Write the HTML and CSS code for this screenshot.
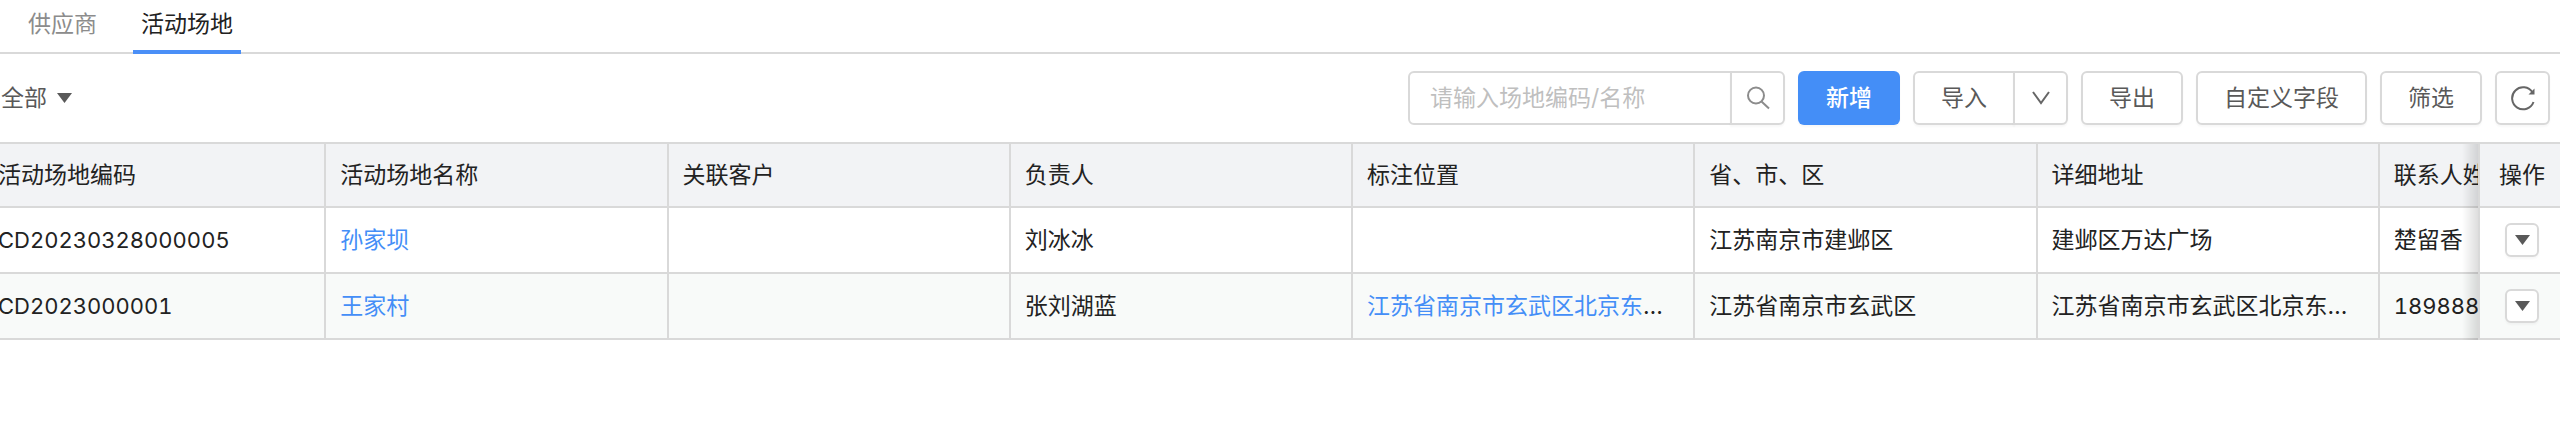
FILE: index.html
```html
<!DOCTYPE html>
<html lang="zh-CN">
<head>
  <meta charset="UTF-8">
  <title>活动场地</title>
  <meta name="viewport" content="width=device-width, initial-scale=1.0">
  <link rel="stylesheet" href="styles.css">
</head>
<body>
<nav class="tabs">
  <a class="tab" href="#supplier">供应商</a>
  <a class="tab active" href="#venue">活动场地</a>
</nav>

<div class="toolbar">
  <button class="filter-all" type="button">全部
    <svg class="caret" viewBox="0 0 15 10"><path d="M0 0h15L7.500 10z"/></svg>
  </button>
  <div class="actions">
    <form class="search">
      <input type="text" class="search-input" aria-label="搜索场地" placeholder="请输入场地编码/名称">
      <button class="btn btn-icon search-btn" type="button" aria-label="搜索">
        <svg class="icon" viewBox="0 0 24 24"><circle cx="10" cy="9.500" r="8"/><path d="M15.500 15.500l7.500 7"/></svg>
      </button>
    </form>
    <button class="btn btn-primary" type="button">新增</button>
    <div class="btn-group">
      <button class="btn" type="button">导入</button>
      <button class="btn btn-icon" type="button" aria-label="更多导入">
        <svg class="icon" viewBox="0 0 24 24"><path d="M4 6l8 11 8-11"/></svg>
      </button>
    </div>
    <button class="btn" type="button">导出</button>
    <button class="btn" type="button">自定义字段</button>
    <button class="btn" type="button">筛选</button>
    <button class="btn btn-icon" type="button" aria-label="刷新">
      <svg class="icon refresh" viewBox="0 0 26 26"><path d="M23.500 17A11 11 0 1 1 22.500 7.500"/><path class="fill" d="M24.500 3.500v6h-6z"/></svg>
    </button>
  </div>
</div>

<div class="table-wrap">
  <table class="grid">
    <colgroup>
      <col span="8">
      <col class="col-op">
    </colgroup>
    <thead>
      <tr>
        <th>活动场地编码</th>
        <th>活动场地名称</th>
        <th>关联客户</th>
        <th>负责人</th>
        <th>标注位置</th>
        <th>省、市、区</th>
        <th>详细地址</th>
        <th>联系人姓名</th>
        <th class="op">操作</th>
      </tr>
    </thead>
    <tbody>
      <tr>
        <td class="num">CD20230328000005</td>
        <td><a href="#sunjiaba">孙家坝</a></td>
        <td></td>
        <td>刘冰冰</td>
        <td></td>
        <td>江苏南京市建邺区</td>
        <td>建邺区万达广场</td>
        <td>楚留香</td>
        <td class="op">
          <button class="row-menu" type="button" aria-label="操作菜单"><svg class="caret" viewBox="0 0 15 10"><path d="M0 0h15L7.500 10z"/></svg></button>
        </td>
      </tr>
      <tr>
        <td class="num">CD2023000001</td>
        <td><a href="#wangjiacun">王家村</a></td>
        <td></td>
        <td>张刘湖蓝</td>
        <td><a href="#map">江苏省南京市玄武区北京东路44号</a></td>
        <td>江苏省南京市玄武区</td>
        <td>江苏省南京市玄武区北京东路44号</td>
        <td class="num">18988888888</td>
        <td class="op">
          <button class="row-menu" type="button" aria-label="操作菜单"><svg class="caret" viewBox="0 0 15 10"><path d="M0 0h15L7.500 10z"/></svg></button>
        </td>
      </tr>
    </tbody>
  </table>
</div>
</body>
</html>
```
FILE: styles.css
```css
* {
  box-sizing: border-box;
}
body {
  margin: 0;
  background: #fff;
  color: #222;
  font-family: Inter, "Noto Sans CJK SC", sans-serif;
  font-size: 23px;
  line-height: 32px;
}
button, input {
  font: inherit;
  color: #595959;
}
a {
  color: #448ef7;
  text-decoration: none;
}

/* tabs */
.tabs {
  display: flex;
  gap: 28px;
  height: 54px;
  padding-left: 20px;
  border-bottom: 2px solid #d9d9d9;
}
.tab {
  height: 54px;
  padding: 8px 8px 0;
  color: #8c8c8c;
}
.tab.active {
  color: #222;
  border-bottom: 4px solid #4a8ff7;
}

/* toolbar */
.toolbar {
  display: flex;
  justify-content: space-between;
  align-items: center;
  height: 88px;
  padding: 0 10px 0 1px;
}
.filter-all {
  display: flex;
  align-items: center;
  gap: 10px;
  padding: 0;
  border: none;
  background: none;
}
.caret {
  display: block;
  width: 15px;
  height: 10px;
  fill: #595959;
}
.actions {
  display: flex;
  gap: 13px;
}
.btn {
  height: 54px;
  padding: 0 26px;
  border: 2px solid #d9d9d9;
  border-radius: 6px;
  background: #fff;
  box-shadow: 0 2px 2px rgba(0, 0, 0, 0.03);
  cursor: pointer;
}
.btn-primary {
  padding: 0 28px;
  border: none;
  background: #448ef7;
  color: #fff;
  font-weight: 500;
}
.btn-icon {
  display: flex;
  align-items: center;
  justify-content: center;
  width: 55px;
  padding: 0;
}
.icon {
  width: 24px;
  height: 24px;
  fill: none;
  stroke: #666;
  stroke-width: 2;
}
.icon .fill {
  fill: #666;
  stroke: none;
}
.icon.refresh {
  width: 26px;
  height: 26px;
}
.search, .btn-group {
  display: flex;
}
.search-input {
  width: 324px;
  height: 54px;
  padding: 0 20px;
  border: 2px solid #d9d9d9;
  border-radius: 6px 0 0 6px;
  outline: none;
}
.search-input::placeholder {
  color: #bfbfbf;
}
.search-btn .icon {
  stroke: #8c8c8c;
}
.search-btn,
.btn-group .btn:last-child {
  margin-left: -2px;
  border-radius: 0 6px 6px 0;
}
.btn-group .btn:first-child {
  border-radius: 6px 0 0 6px;
}

/* table, scrolled a little to the right */
.table-wrap {
  overflow: hidden;
}
.grid {
  width: calc(110% + 4px);
  margin-left: -16px;
  table-layout: fixed;
  border-collapse: separate;
  border-spacing: 0;
  border-top: 2px solid #d9d9d9;
}
.col-op {
  width: 82px;
}
.grid th,
.grid td {
  height: 66px;
  padding: 0 14px;
  border-right: 2px solid #d9d9d9;
  border-bottom: 2px solid #d9d9d9;
  background: #fff;
  font-weight: 400;
  text-align: left;
  white-space: nowrap;
  overflow: hidden;
  text-overflow: ellipsis;
}
.grid th {
  height: 64px;
  background: #f2f3f5;
}
.grid .num {
  font-size: 22px;
  font-variant-numeric: tabular-nums;
}
.grid tbody tr:nth-child(even) td {
  background: #f8faf9;
}
.grid .op {
  position: sticky;
  right: 0;
  padding: 0 0 0 4px;
  border-left: 2px solid #d9d9d9;
  border-right: none;
  text-align: center;
  overflow: visible;
}
.grid .op::before {
  content: "";
  position: absolute;
  top: 0;
  bottom: -2px;
  left: -18px;
  width: 16px;
  background: linear-gradient(to right, transparent, rgba(0, 0, 0, 0.13));
}
.row-menu {
  display: inline-flex;
  align-items: center;
  justify-content: center;
  width: 34px;
  height: 34px;
  padding: 0;
  border: 2px solid #d9d9d9;
  border-radius: 6px;
  background: #fff;
  box-shadow: 0 2px 2px rgba(0, 0, 0, 0.03);
  vertical-align: middle;
}
```
